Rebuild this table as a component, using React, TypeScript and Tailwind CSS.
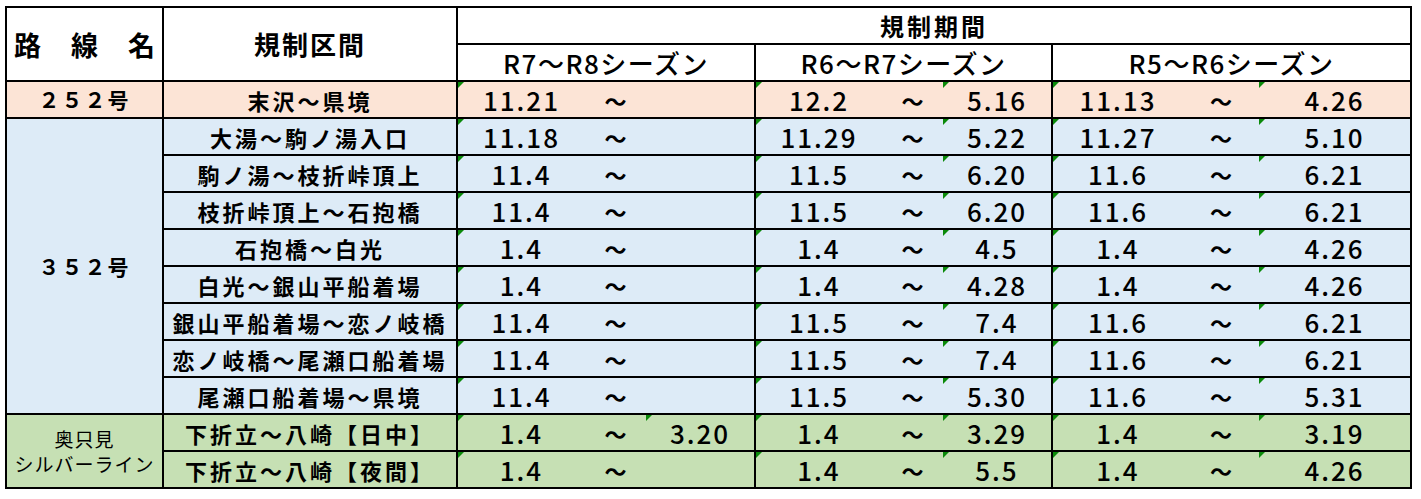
import React from "react";

type Pair = [string, string];
type Row = { name: string; r7: Pair; r6: Pair; r5: Pair };

const bgPeach = "bg-[#fce4d6]";
const bgBlue = "bg-[#ddebf7]";
const bgGreen = "bg-[#c6e0b4]";

const Tri = () => (
  <span className="absolute left-0 top-0 h-0 w-0 border-t-[6px] border-r-[6px] border-t-[#0a8a0a] border-r-transparent" />
);

function Dates({ p }: { p: Pair }) {
  return (
    <>
      <td className="relative border-y-2 border-l-2 border-black p-0 text-center align-middle text-[26px] font-medium leading-none tracking-[2px]">
        {p[0] && <Tri />}
        {p[0]}
      </td>
      <td className="border-y-2 border-black p-0 text-center align-middle text-[22px] font-bold leading-none">～</td>
      <td className="relative border-y-2 border-r-2 border-black p-0 text-center align-middle text-[26px] font-medium leading-none tracking-[2px]">
        {p[1] && <Tri />}
        {p[1]}
      </td>
    </>
  );
}

function DataRow({ row, bg, first }: { row: Row; bg: string; first?: React.ReactNode }) {
  return (
    <tr className={`h-[37px] ${bg}`}>
      {first}
      <td className="border-2 border-black p-0 text-center align-middle text-[22px] font-bold leading-none tracking-[3px]">
        {row.name}
      </td>
      <Dates p={row.r7} />
      <Dates p={row.r6} />
      <Dates p={row.r5} />
    </tr>
  );
}

const r252: Row = { name: "末沢～県境", r7: ["11.21", ""], r6: ["12.2", "5.16"], r5: ["11.13", "4.26"] };

const r352: Row[] = [
  { name: "大湯～駒ノ湯入口", r7: ["11.18", ""], r6: ["11.29", "5.22"], r5: ["11.27", "5.10"] },
  { name: "駒ノ湯～枝折峠頂上", r7: ["11.4", ""], r6: ["11.5", "6.20"], r5: ["11.6", "6.21"] },
  { name: "枝折峠頂上～石抱橋", r7: ["11.4", ""], r6: ["11.5", "6.20"], r5: ["11.6", "6.21"] },
  { name: "石抱橋～白光", r7: ["1.4", ""], r6: ["1.4", "4.5"], r5: ["1.4", "4.26"] },
  { name: "白光～銀山平船着場", r7: ["1.4", ""], r6: ["1.4", "4.28"], r5: ["1.4", "4.26"] },
  { name: "銀山平船着場～恋ノ岐橋", r7: ["11.4", ""], r6: ["11.5", "7.4"], r5: ["11.6", "6.21"] },
  { name: "恋ノ岐橋～尾瀬口船着場", r7: ["11.4", ""], r6: ["11.5", "7.4"], r5: ["11.6", "6.21"] },
  { name: "尾瀬口船着場～県境", r7: ["11.4", ""], r6: ["11.5", "5.30"], r5: ["11.6", "5.31"] },
];

const rOku: Row[] = [
  { name: "下折立～八崎【日中】", r7: ["1.4", "3.20"], r6: ["1.4", "3.29"], r5: ["1.4", "3.19"] },
  { name: "下折立～八崎【夜間】", r7: ["1.4", ""], r6: ["1.4", "5.5"], r5: ["1.4", "4.26"] },
];

export default function App() {
  return (
    <div className="min-h-[499px] w-[1421px] bg-white pl-[5px] pt-[6px] font-['Noto_Sans_CJK_JP',sans-serif] text-black">
      <table className="w-[1407px] table-fixed border-collapse">
        <colgroup>
          <col className="w-[157px]" />
          <col className="w-[294px]" />
          <col className="w-[128px]" />
          <col className="w-[61px]" />
          <col className="w-[109px]" />
          <col className="w-[127px]" />
          <col className="w-[61px]" />
          <col className="w-[109px]" />
          <col className="w-[131px]" />
          <col className="w-[76px]" />
          <col className="w-[152px]" />
        </colgroup>
        <thead>
          <tr className="h-[37px] bg-white">
            <th rowSpan={2} className="border-2 border-black p-0 align-middle text-[27px] font-bold leading-none">
              <div className="flex justify-between px-[7px]">
                <span>路</span>
                <span>線</span>
                <span>名</span>
              </div>
            </th>
            <th rowSpan={2} className="border-2 border-black p-0 text-center align-middle text-[26px] font-bold leading-none tracking-[2px]">
              規制区間
            </th>
            <th colSpan={9} className="border-2 border-black p-0 text-center align-middle text-[24px] font-bold leading-none tracking-[3px]">
              規制期間
            </th>
          </tr>
          <tr className="h-[37px] bg-white">
            <th colSpan={3} className="border-2 border-black p-0 text-center align-middle text-[26px] font-medium leading-none tracking-[1.5px]">
              R7～R8シーズン
            </th>
            <th colSpan={3} className="border-2 border-black p-0 text-center align-middle text-[26px] font-medium leading-none tracking-[1.5px]">
              R6～R7シーズン
            </th>
            <th colSpan={3} className="border-2 border-black p-0 text-center align-middle text-[26px] font-medium leading-none tracking-[1.5px]">
              R5～R6シーズン
            </th>
          </tr>
        </thead>
        <tbody>
          <DataRow
            row={r252}
            bg={bgPeach}
            first={
              <td className="border-2 border-black p-0 text-center align-middle text-[21px] font-bold leading-none tracking-[2px]">
                ２５２号
              </td>
            }
          />
          {r352.map((r, i) => (
            <DataRow
              key={r.name}
              row={r}
              bg={bgBlue}
              first={
                i === 0 ? (
                  <td rowSpan={8} className="border-2 border-black p-0 text-center align-middle text-[21px] font-bold leading-none tracking-[2px]">
                    ３５２号
                  </td>
                ) : undefined
              }
            />
          ))}
          {rOku.map((r, i) => (
            <DataRow
              key={r.name}
              row={r}
              bg={bgGreen}
              first={
                i === 0 ? (
                  <td rowSpan={2} className="border-2 border-black p-0 text-center align-middle text-[19px] font-normal leading-[25px] tracking-[1px]">
                    <div>奥只見</div>
                    <div>シルバーライン</div>
                  </td>
                ) : undefined
              }
            />
          ))}
        </tbody>
      </table>
    </div>
  );
}
